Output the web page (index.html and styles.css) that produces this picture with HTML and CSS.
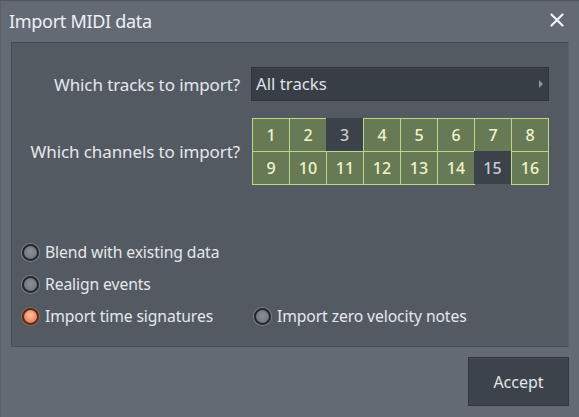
FILE: index.html
```html
<!DOCTYPE html>
<html>
<head>
<meta charset="utf-8">
<link rel="stylesheet" href="styles.css">
</head>
<body>
<div class="window">
  <div class="titlebar">
    <span class="title">Import MIDI data</span>
    <svg class="close" width="14" height="14" viewBox="0 0 14 14"><path d="M1.5 1.5 L12.5 12.5 M12.5 1.5 L1.5 12.5" stroke="#f2f4f6" stroke-width="2.2" stroke-linecap="round"/></svg>
  </div>
  <div class="panel">
    <div class="row row-tracks">
      <div class="label">Which tracks to import?</div>
      <div class="dropdown">
        <span>All tracks</span>
        <svg class="arrow" width="6" height="10" viewBox="0 0 6 10"><path d="M1 1 L5 5 L1 9 Z" fill="#8d939a"/></svg>
      </div>
    </div>
    <div class="row row-channels">
      <div class="label">Which channels to import?</div>
      <div class="grid">
        <div class="cell on">1</div><div class="cell on">2</div><div class="cell off">3</div><div class="cell on">4</div><div class="cell on">5</div><div class="cell on">6</div><div class="cell on">7</div><div class="cell on">8</div>
        <div class="cell on">9</div><div class="cell on">10</div><div class="cell on">11</div><div class="cell on">12</div><div class="cell on">13</div><div class="cell on">14</div><div class="cell off">15</div><div class="cell on">16</div>
      </div>
    </div>
    <div class="options">
      <div class="opt-row"><label class="radio"><span class="dot"></span>Blend with existing data</label></div>
      <div class="opt-row"><label class="radio"><span class="dot"></span>Realign events</label></div>
      <div class="opt-row">
        <label class="radio wide"><span class="dot active"></span>Import time signatures</label>
        <label class="radio"><span class="dot"></span>Import zero velocity notes</label>
      </div>
    </div>
  </div>
  <div class="footer">
    <button class="accept">Accept</button>
  </div>
</div>
</body>
</html>
```

FILE: styles.css
```css
* { box-sizing: border-box; }
html, body { margin: 0; padding: 0; }
body {
  width: 579px;
  height: 417px;
  background: #636a74;
  font-family: "Noto Sans", "Open Sans", sans-serif;
  color: #e6eaee;
  overflow: hidden;
}
.window {
  width: 579px;
  height: 417px;
  border-top: 1px solid #4f565e;
  border-left: 1px solid #59606a;
  display: flex;
  flex-direction: column;
}
.titlebar {
  height: 41px;
  display: flex;
  align-items: center;
  justify-content: space-between;
  padding: 0 15px 0 8px;
}
.title {
  font-size: 18px;
  color: #eef1f4;
  letter-spacing: -0.3px;
  margin-top: -2px;
}
.close { margin-top: -4px; }
.panel {
  margin: 0 10px 0 10px;
  height: 305px;
  background: #535a62;
  border: 1px solid #454b53;
  border-top-color: #444a51;
  border-right-color: #5c636c;
  border-bottom-color: #474d55;
  display: flex;
  flex-direction: column;
}
.row {
  display: flex;
  align-items: center;
  gap: 11px;
}
.row-tracks { margin-top: 24px; }
.row-channels { margin-top: 17px; }
.label {
  width: 228px;
  text-align: right;
  font-size: 17px;
  color: #e4e8ec;
  letter-spacing: -0.1px;
  white-space: nowrap;
}
.dropdown {
  width: 298px;
  height: 34px;
  background: #383e45;
  border: 1px solid #2f343a;
  box-shadow: inset 0 1px 0 #3f454c;
  display: flex;
  align-items: center;
  justify-content: space-between;
  padding: 0 4px 0 4px;
  font-size: 16.8px;
  color: #dfe3e7;
}
.dropdown span { margin-top: -1px; }
.grid {
  display: grid;
  grid-template-columns: repeat(8, 37px);
  grid-template-rows: repeat(2, 33px);
  width: 297px;
  margin-left: 1px;
}
.cell {
  display: flex;
  align-items: center;
  justify-content: center;
  font-size: 16px;
  font-weight: 500;
}
.cell.on {
  background: #687a55;
  border: 1px solid #b9d88a;
  color: #eef4cc;
  margin: 0 -1px -1px 0;
}
.cell.off {
  background: #3b424a;
  color: #c9cdd2;
}
.options {
  margin-top: 52px;
  margin-left: 10px;
  display: flex;
  flex-direction: column;
}
.opt-row {
  height: 32px;
  display: flex;
  align-items: center;
}
.radio {
  display: flex;
  align-items: center;
  gap: 6px;
  font-size: 15.7px;
  color: #e4e8ec;
  letter-spacing: -0.1px;
  white-space: nowrap;
}
.radio.wide { width: 232px; }
.dot {
  width: 17px;
  height: 17px;
  border-radius: 50%;
  background: radial-gradient(circle at 50% 45%, #8b9197 0%, #72787e 70%);
  border: 2px solid #24282d;
  box-shadow: 0 0 0 1px #7c838b;
  flex: none;
}
.dot.active {
  background: radial-gradient(circle at 50% 40%, #fbc3a4 0%, #f0916a 55%, #d8653f 100%);
  border-color: #5a2a1c;
  box-shadow: 0 0 0 1px #8a6a62;
}
.footer {
  display: flex;
  justify-content: flex-end;
  padding: 10px 10px 0 0;
}
.accept {
  width: 101px;
  height: 49px;
  background: #3d434b;
  border: 1px solid #32373d;
  box-shadow: inset 0 1px 0 #474e56;
  color: #e2e6ea;
  font-family: "Noto Sans", "Open Sans", sans-serif;
  font-size: 16px;
  padding: 0;
}
```
